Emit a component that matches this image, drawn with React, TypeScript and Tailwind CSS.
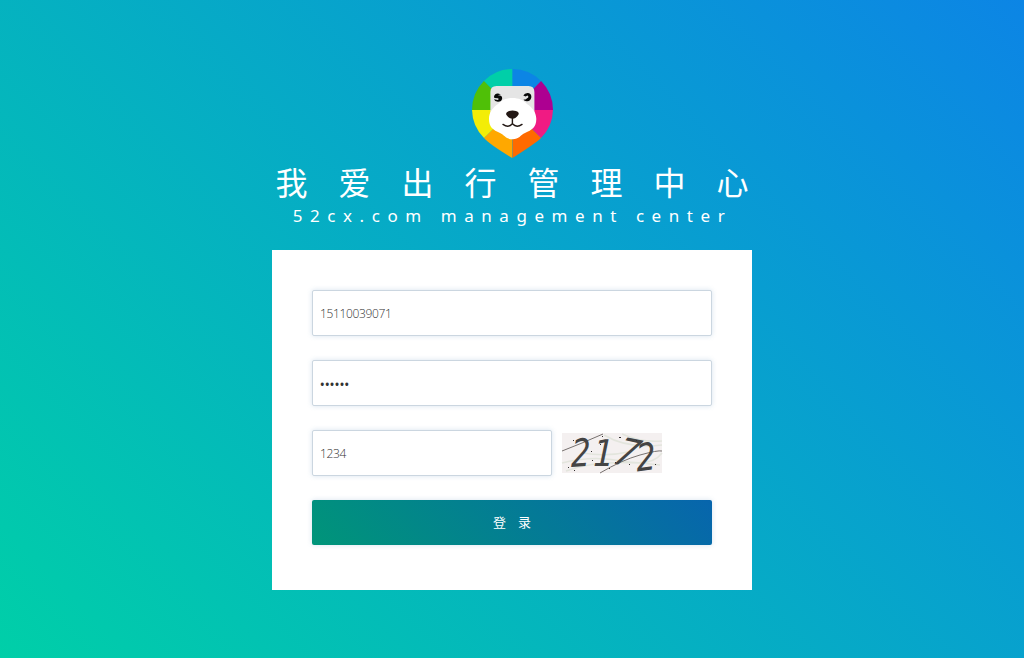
const field =
  "block h-[46px] rounded-xs border border-[#cbd6e0] bg-white px-[7px] font-['Open_Sans','Noto_Sans',sans-serif] text-xs text-[#333] shadow-[0_0_5px_rgba(120,160,200,0.3)] outline-none";

function Logo() {
  return (
    <svg className="block h-[89px] w-[81px]" viewBox="0 0 81 89" aria-hidden="true">
      <path d="M40.5 41V0A40.5 41 0 0 0 11.9 12Z" fill="#00cfa8" />
      <path d="M40.5 41V0A40.5 41 0 0 1 69.1 12Z" fill="#0c85e5" />
      <path d="M40.5 41 69.1 12A40.5 41 0 0 1 81 41Z" fill="#ad0091" />
      <path d="M40.5 41H81A40.5 41 0 0 1 69 69Z" fill="#f01b83" />
      <path d="M40.5 41 69 69Q64 74 40.5 89Z" fill="#ff6a00" />
      <path d="M40.2 41V89Q17 75 12 69Z" fill="#ffa800" />
      <path d="M40.5 41H0A40.5 41 0 0 0 12 69Z" fill="#f3ed07" />
      <path d="M40.5 41H0A40.5 41 0 0 1 11.9 12Z" fill="#4fc007" />
      <path d="M24.5 17H56.5Q62.4 17 62.4 23V48H18.4V23Q18.4 17 24.5 17Z" fill="#e5e5e5" />
      <path d="M40.5 29C47 29 51 31 55 35C60 38.5 64.3 43 64.3 50C64.3 58 60 61 53 64C48.5 66 47 70.3 40.5 70.3C34 70.3 32.5 66 28 64C21 61 17 58 17 50C17 43 21 38.5 26 35C30 31 34 29 40.5 29Z" fill="#fff" />
      <path d="M22 27.6Q22.8 24.2 26 24.4L28.8 25.2 25.8 26.2Q30.2 26 30.2 29.2Q29.8 32.8 25.8 32.7Q22.6 32.5 22 30.3L26 30.9Q27.4 30 26 29.2L22.4 28.9Z" fill="#080808" />
      <path d="M51.3 26.6Q52.6 23.8 56 24Q59.9 24.8 59.3 28.6Q58.6 32.4 54.8 32.2Q52 32 51.5 30.4L53.4 30.6 56.2 28.6Q56.8 27 55.4 26.4L53.6 27.4Z" fill="#080808" />
      <path d="M37 42Q40.5 41 44 42Q48 43.4 46.2 46Q44 49.6 40.4 49.7Q36.7 49.6 34.5 46Q33 43.4 37 42Z" fill="#231815" />
      <path d="M40.4 49V54.6M31 55.4Q36.4 59.2 40.4 54.8Q44.6 59.2 50 55.4" fill="none" stroke="#231815" strokeWidth="1.4" strokeLinecap="round" />
    </svg>
  );
}

function Captcha() {
  return (
    <svg className="block h-10 w-[100px] overflow-visible" viewBox="0 0 100 40" role="img" aria-label="2172">
      <rect width="100" height="40" fill="#f4f0f0" />
      <path
        d="M0 30Q30 22 60 28T100 20M4 38Q40 25 98 32M42 2Q65 16 100 12M20 20Q45 24 66 19M60 1Q80 10 100 8"
        fill="none"
        stroke="#e3e5dd"
        strokeWidth="1.5"
      />
      <path d="M0 18 20 10 41 1M38 40Q60 27 78 22T100 18" fill="none" stroke="#77716f" strokeWidth="1" />
      <g fill="#444" fontFamily="DejaVu Sans" fontStyle="italic" fontSize="36">
        <text transform="translate(9 34) rotate(-4) skewX(-5) scale(.84 1.06)">2</text>
        <text transform="translate(31 32.5) skewX(-2) scale(.9 1.02)">1</text>
        <text transform="translate(49.5 30) rotate(12) skewX(-12) scale(.92 1.08)">7</text>
        <text transform="translate(75 38.5) rotate(-8) skewX(-4) scale(.86 1.04)">2</text>
      </g>
      <path d="M11 7h1v1h-1zM29 18h1v1h-1zM30 27h1v1h-1zM57 4h2v1h-2zM38 11h1v1h-1zM53 29h1v1h-1zM6 34h1v1h-1zM12 37h1v1h-1zM40 3h1v1h-1zM67 31h1v1h-1zM93 31h1v1h-1zM74 7h1v1h-1zM47 35h1v1h-1z" fill="#332f30" />
    </svg>
  );
}

export default function App() {
  return (
    <main className="flex h-[658px] w-full flex-col items-center bg-[linear-gradient(45deg,#00cfa8,#0c85e5)] pt-[69px]">
      <Logo />
      <h1 className="mt-[3px] -mr-[31px] h-10 whitespace-nowrap font-['Noto_Sans_CJK_SC',sans-serif] text-[32px] leading-10 tracking-[31px] text-white">
        我爱出行管理中心
      </h1>
      <p className="-mr-[1px] mt-[3px] h-6 whitespace-nowrap font-['Noto_Sans',sans-serif] text-[17px] leading-6 tracking-[7.56px] text-white">
        52cx.com management center
      </p>
      <form className="mt-[22px] flex h-[340px] w-[480px] flex-col gap-6 bg-white p-10" onSubmit={(e) => e.preventDefault()}>
        <input className={`${field} w-full font-light tracking-[-0.35px]`} defaultValue="15110039071" aria-label="手机号" />
        <input className={`${field} w-full pt-[3px] font-semibold tracking-[0.4px]`} defaultValue="••••••" aria-label="密码" />
        <div className="flex items-center gap-[10px]">
          <input className={`${field} w-60 font-light tracking-[-0.35px]`} defaultValue="1234" aria-label="验证码" />
          <Captcha />
        </div>
        <button className="h-[45px] w-full shrink-0 rounded-xs bg-[linear-gradient(45deg,#009579,#0765ad)] pb-[2px] font-['Noto_Sans_CJK_SC',sans-serif] text-[13px] text-white shadow-[0_0_5px_rgba(120,160,200,0.3)]">
          <span className="-mr-3 tracking-[12px]">登录</span>
        </button>
      </form>
    </main>
  );
}
